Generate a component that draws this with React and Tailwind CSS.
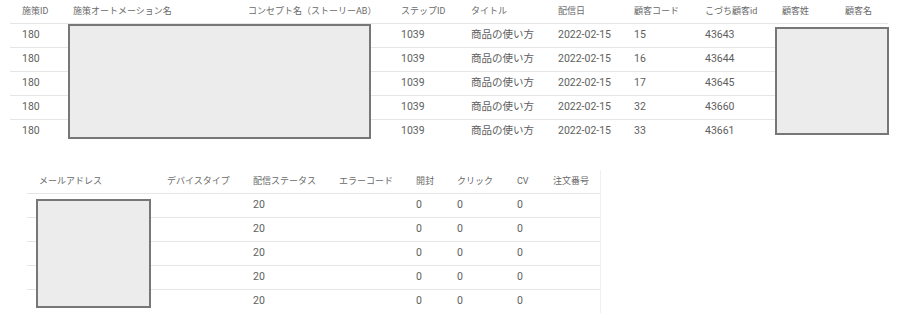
import React from 'react';

const topCols = [51, 175, 153, 70, 87, 76, 71, 77, 63, 55];
const topHead = ['施策ID', '施策オートメーション名', 'コンセプト名（ストーリーAB）', 'ステップID', 'タイトル', '配信日', '顧客コード', 'こづち顧客id', '顧客姓', '顧客名'];
const topRows = [
    ['15', '43643'],
    ['16', '43644'],
    ['17', '43645'],
    ['32', '43660'],
    ['33', '43661'],
];

const bottomCols = [128, 86, 86, 77, 41, 60, 36, 59];
const bottomHead = ['メールアドレス', 'デバイスタイプ', '配信ステータス', 'エラーコード', '開封', 'クリック', 'CV', '注文番号'];

const Redact = ({ className }) => (
    <div className={`absolute border-2 border-[#777] bg-[#ececec] ${className}`} />
);

const App = () => {
    return (
        <main
            className="w-[918px] h-[318px] bg-white overflow-hidden text-[#5e5e5e]"
            style={{ fontFamily: 'Roboto, "Noto Sans CJK JP", sans-serif' }}
        >
            <div className="relative ml-[10px] w-[878px]">
                <table className="table-fixed border-collapse w-full">
                    <colgroup>
                        {topCols.map((w, i) => <col key={i} style={{ width: w }} />)}
                    </colgroup>
                    <thead>
                        <tr className="h-[23px] border-b border-[#e6e6e6]">
                            {topHead.map((h) => (
                                <th key={h} className="pl-3 text-left font-normal text-[9px] text-[#6a6a6a] whitespace-nowrap">{h}</th>
                            ))}
                        </tr>
                    </thead>
                    <tbody className="text-[10.5px]">
                        {topRows.map(([code, id], i) => (
                            <tr key={id} className={`h-[24px] ${i < topRows.length - 1 ? 'border-b border-[#e6e6e6]' : ''}`}>
                                <td className="pl-3">180</td>
                                <td></td>
                                <td></td>
                                <td className="pl-3">1039</td>
                                <td className="pl-3 whitespace-nowrap">商品の使い方</td>
                                <td className="pl-3">2022-02-15</td>
                                <td className="pl-3">{code}</td>
                                <td className="pl-3">{id}</td>
                                <td></td>
                                <td></td>
                            </tr>
                        ))}
                    </tbody>
                </table>
                <Redact className="left-[58px] top-[24px] w-[303px] h-[115px]" />
                <Redact className="left-[765px] top-[27px] w-[114px] h-[108px]" />
            </div>

            <div className="relative ml-[27px] mt-[27px] w-[574px] border-r border-[#f0f0f0]">
                <table className="table-fixed border-collapse w-full">
                    <colgroup>
                        {bottomCols.map((w, i) => <col key={i} style={{ width: w }} />)}
                    </colgroup>
                    <thead>
                        <tr className="h-[23px] border-b border-[#e6e6e6]">
                            {bottomHead.map((h) => (
                                <th key={h} className="pl-3 text-left font-normal text-[9px] text-[#6a6a6a] whitespace-nowrap">{h}</th>
                            ))}
                        </tr>
                    </thead>
                    <tbody className="text-[10.5px]">
                        {[0, 1, 2, 3, 4].map((i) => (
                            <tr key={i} className={`h-[24px] ${i < 4 ? 'border-b border-[#e6e6e6]' : ''}`}>
                                <td></td>
                                <td></td>
                                <td className="pl-3">20</td>
                                <td></td>
                                <td className="pl-3">0</td>
                                <td className="pl-3">0</td>
                                <td className="pl-3">0</td>
                                <td></td>
                            </tr>
                        ))}
                    </tbody>
                </table>
                <Redact className="left-[9px] top-[29px] w-[115px] h-[109px]" />
            </div>
        </main>
    );
};

export default App;
